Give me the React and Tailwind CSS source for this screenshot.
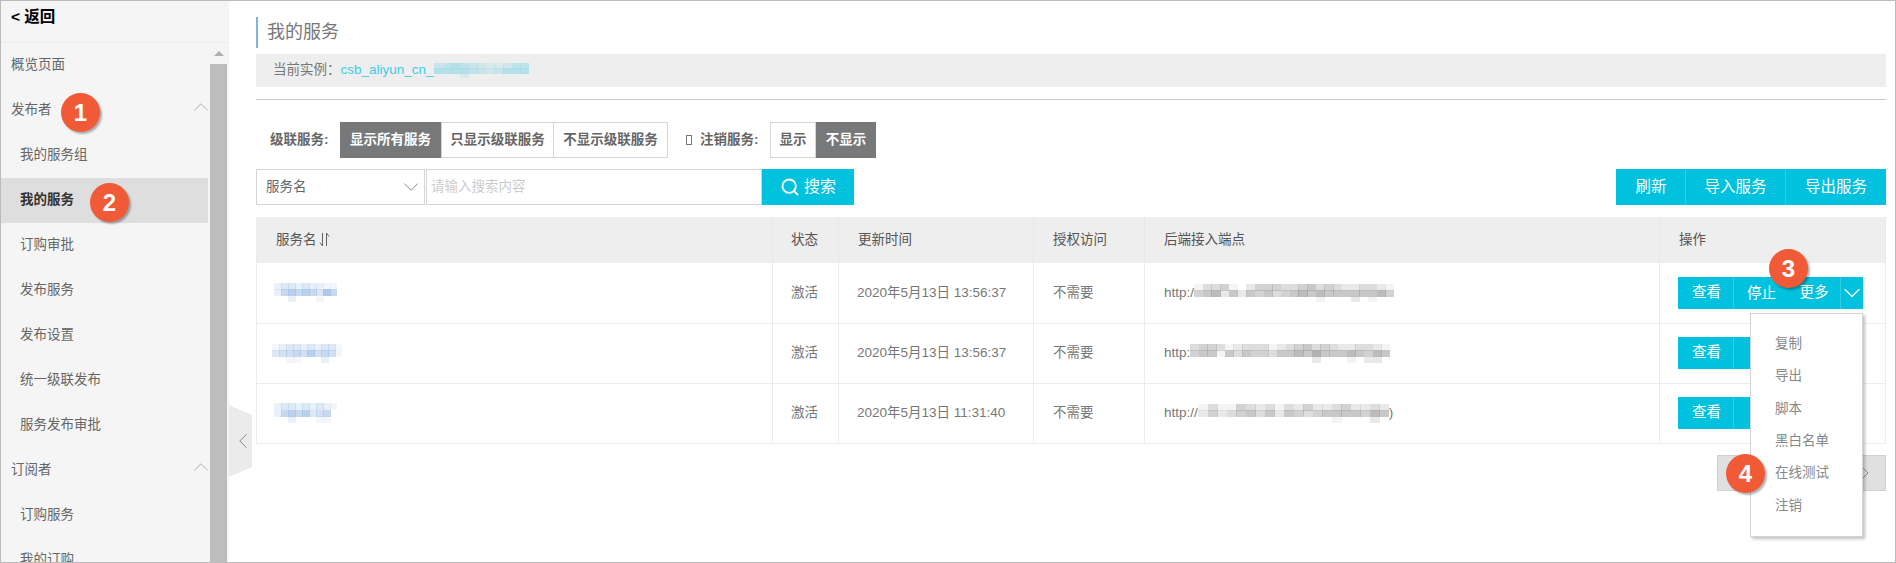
import { Search, ChevronDown, ChevronUp, ChevronLeft, ChevronRight } from 'lucide-react'

const FONT = { fontFamily: '"Liberation Sans", "Noto Sans CJK SC", sans-serif' }

const MENU = [
  { label: '概览页面' },
  { label: '发布者', group: true },
  { label: '我的服务组', sub: true },
  { label: '我的服务', sub: true, active: true },
  { label: '订购审批', sub: true },
  { label: '发布服务', sub: true },
  { label: '发布设置', sub: true },
  { label: '统一级联发布', sub: true },
  { label: '服务发布审批', sub: true },
  { label: '订阅者', group: true },
  { label: '订购服务', sub: true },
  { label: '我的订购', sub: true },
]

const ROWS = [
  {
    time: '2020年5月13日 13:56:37',
    name: { w: 63, h: 19, data: ['233232211', '256565375', '002000100'] },
    url: {
      prefix: 'http:/',
      w: 200,
      h: 18,
      data: ['13341024443345343223321', '45625254534565655555564', '00000000000000100020100'],
    },
  },
  {
    time: '2020年5月13日 13:56:37',
    name: { w: 70, h: 19, data: ['1233232331', '3445464541', '0011000200'] },
    url: {
      prefix: 'http:',
      w: 200,
      h: 19,
      data: ['34431233312345343223321', '45515354435565755565465', '00000000000000200010220'],
    },
  },
  {
    time: '2020年5月13日 11:31:40',
    name: { w: 63, h: 20, data: ['233232321', '256563450', '002000110'] },
    url: {
      prefix: 'http://',
      w: 191,
      h: 19,
      data: ['13114323132422342232', '24234535254345555465', '00000000000000100020'],
    },
  },
]

const ACTIONS = ['复制', '导出', '脚本', '黑白名单', '在线测试', '注销']

// pixelated patch standing in for redacted text; digits are opacity steps
function Mosaic({ w, h, data, color, className = '' }) {
  const cols = data[0].length
  const cw = w / cols
  const ch = h / data.length
  return (
    <svg width={w} height={h} className={`block shrink-0 ${className}`} shapeRendering="crispEdges">
      {data.map((row, y) =>
        [...row].map((d, x) => (
          <rect key={`${x}-${y}`} x={x * cw} y={y * ch} width={cw + 0.5} height={ch + 0.5} fill={color} opacity={Number(d) / 8} />
        )),
      )}
    </svg>
  )
}

function Badge({ n, className }) {
  return (
    <div className={`absolute z-20 flex h-[39px] w-[39px] items-center justify-center rounded-full bg-[#f15a36] text-[24px] font-bold text-white shadow-[2px_2px_2px_rgba(0,0,0,0.3)] ${className}`}>
      {n}
    </div>
  )
}

function Sidebar() {
  return (
    <aside className="relative flex w-[228px] shrink-0 flex-col overflow-hidden bg-[#f5f5f5]">
      <div className="flex h-[42px] shrink-0 items-start border-b border-[#ececec] pl-[10px] pt-[6px] text-[15.5px] font-bold leading-[20px] text-black">
        &lt; 返回
      </div>
      <div className="flex min-h-0 flex-1">
        <ul className="w-[207px] shrink-0">
          {MENU.map((m) => (
            <li
              key={m.label}
              className={`flex h-[45px] shrink-0 items-center justify-between text-[13.5px] ${m.sub ? 'pl-[19px]' : 'pl-[10px]'} ${m.active ? 'bg-[#dedede] font-bold text-[#333]' : 'text-[#666]'}`}
            >
              {m.label}
              {m.group && <ChevronUp size={26} strokeWidth={0.7} className="mb-[8px] mr-[-6px] text-[#999]" />}
            </li>
          ))}
        </ul>
        <div className="ml-[2px] flex w-[17px] shrink-0 flex-col">
          <div className="flex h-[21px] shrink-0 items-center justify-center">
            <span className="h-0 w-0 border-x-[5px] border-b-[5px] border-x-transparent border-b-[#b0b0b0]" />
          </div>
          <div className="flex-1 bg-[#bdbdbd]" />
        </div>
      </div>
    </aside>
  )
}

function Seg({ children, dark }) {
  return (
    <div className={`flex h-full items-center justify-center px-[8px] ${dark ? 'bg-[#76787a] text-white' : 'border border-[#d5d5d5] bg-white text-[#666]'}`}>
      {children}
    </div>
  )
}

function Filters() {
  return (
    <div className="mt-[22px] flex h-[36px] items-center text-[13.5px] font-bold text-[#666]">
      <span className="ml-[14px] w-[70px]">级联服务:</span>
      <div className="flex h-full">
        <div className="w-[101px]"><Seg dark>显示所有服务</Seg></div>
        <div className="w-[113px]"><Seg>只显示级联服务</Seg></div>
        <div className="ml-[-1px] w-[115px]"><Seg>不显示级联服务</Seg></div>
      </div>
      <span className="ml-[18px] mr-[8px] inline-block h-[10px] w-[6px] border border-[#777]" />
      <span className="w-[70px]">注销服务:</span>
      <div className="flex h-full">
        <div className="w-[46px]"><Seg>显示</Seg></div>
        <div className="w-[60px]"><Seg dark>不显示</Seg></div>
      </div>
    </div>
  )
}

function SearchRow() {
  return (
    <div className="mt-[11px] flex h-[36px] justify-between">
      <div className="flex">
        <div className="flex w-[169px] items-center justify-between border border-[#d5d5d5] pl-[9px] text-[13.5px] text-[#666]">
          服务名
          <ChevronDown size={26} strokeWidth={0.8} className="text-[#777]" />
        </div>
        <div className="ml-px flex w-[336px] items-center border border-[#d5d5d5] pl-[4px] text-[13.5px] text-[#ccc]">请输入搜索内容</div>
        <button className="flex w-[92px] items-center justify-center gap-[4px] bg-[#00c1de] text-[16px] text-white">
          <Search size={20} strokeWidth={2.2} />
          搜索
        </button>
      </div>
      <div className="flex bg-[#00c1de] text-[15.5px] text-white">
        <button className="w-[69px] pl-[1px]">刷新</button>
        <button className="w-[100px] border-l border-[#33cde5]">导入服务</button>
        <button className="w-[101px] border-l border-[#33cde5]">导出服务</button>
      </div>
    </div>
  )
}

function SortIcon() {
  return (
    <svg width="11" height="16" viewBox="0 0 11 16" fill="none" stroke="#666" strokeWidth="1" className="ml-[2px] shrink-0">
      <path d="M3.5 1v13M3.5 14L1 10.5" />
      <path d="M7.5 14V1M7.5 1L10 4.5" />
    </svg>
  )
}

function ServiceTable() {
  const th = 'border-r border-[#e8e8e8] text-left font-normal text-[#555]'
  const td = 'border-r border-[#ececec] text-[#777]'
  return (
    <table className="mt-[12px] w-[1629px] table-fixed border-collapse border-b border-l border-[#ececec] text-[13.5px]">
      <colgroup>
        <col className="w-[516px]" />
        <col className="w-[66px]" />
        <col className="w-[195px]" />
        <col className="w-[111px]" />
        <col className="w-[515px]" />
        <col className="w-[226px]" />
      </colgroup>
      <thead>
        <tr className="h-[46px] bg-[#eeeeee]">
          <th className={`${th} pl-[19px]`}>
            <span className="flex items-center">服务名<SortIcon /></span>
          </th>
          <th className={`${th} pl-[18px]`}>状态</th>
          <th className={`${th} pl-[19px]`}>更新时间</th>
          <th className={`${th} pl-[19px]`}>授权访问</th>
          <th className={`${th} pl-[19px]`}>后端接入端点</th>
          <th className={`${th} pl-[19px]`}>操作</th>
        </tr>
      </thead>
      <tbody>
        {ROWS.map((r, i) => (
          <tr key={i} className="h-[60px] border-b border-[#ececec] last:border-b-0">
            <td className={td}>
              <Mosaic {...r.name} color="#a3c2e6" className={i === 1 ? 'ml-[15px]' : 'ml-[17px]'} />
            </td>
            <td className={`${td} pl-[18px]`}>激活</td>
            <td className={`${td} pl-[18px]`}>{r.time}</td>
            <td className={`${td} pl-[19px]`}>不需要</td>
            <td className={`${td} pl-[19px]`}>
              <span className="flex items-center">
                {r.url.prefix}
                <Mosaic w={r.url.w} h={r.url.h} data={r.url.data} color="#a6a6a6" />
                {i === 2 && ')'}
              </span>
            </td>
            <td className={`${td} pl-[18px]`}>
              <div className="flex h-[32px] w-[185px] items-center bg-[#00c1de] text-[14.5px] text-white">
                <span className="w-[55px] pl-[2px] text-center">查看</span>
                <span className="h-full w-[55px] border-l border-[#33cde5] pl-[1px] text-center leading-[32px]">{i === 0 && '停止'}</span>
                <span className="w-[52px] text-center">{i === 0 && '更多'}</span>
                <span className="flex h-full w-[23px] items-center justify-center border-l border-[#33cde5]">
                  <ChevronDown size={28} strokeWidth={1.1} className="shrink-0" />
                </span>
              </div>
            </td>
          </tr>
        ))}
      </tbody>
    </table>
  )
}

function Pagination() {
  return (
    <div className="mt-[11px] flex justify-end">
      <div className="flex h-[36px] w-[169px] items-center justify-end border border-[#d0d0d0] bg-[#e0e0e0] pr-[8px]">
        <ChevronRight size={24} strokeWidth={0.9} className="text-[#7a869a]" />
      </div>
    </div>
  )
}

function ActionMenu() {
  return (
    <div className="absolute left-[1749px] top-[312px] z-10 flex h-[224px] w-[113px] flex-col justify-center border border-[#d5d5d5] bg-white pl-[24px] text-[13.5px] text-[#888] shadow-[2px_2px_3px_rgba(0,0,0,0.25)]">
      {ACTIONS.map((a) => (
        <div key={a} className="flex h-[32.3px] shrink-0 items-center">{a}</div>
      ))}
    </div>
  )
}

export default function App() {
  return (
    <div style={FONT} className="relative h-[563px] w-[1896px] overflow-hidden border border-[#bbbbbb] bg-white">
      <div className="flex h-full">
        <Sidebar />
        <main className="min-w-0 flex-1 pl-[27px] pr-[9px] pt-[16px]">
          <div className="flex h-[31px] items-center border-l-2 border-[#7fb5e0] pl-[9px] text-[18px] text-[#777]">我的服务</div>
          <div className="mt-[6px] flex h-[33px] items-center bg-[#eeeeee] pl-[17px] text-[13.5px] text-[#777]">
            当前实例：
            <span className="text-[#3ccde6]">csb_aliyun_cn_</span>
            <Mosaic w={95} h={15} data={['45654322355', '66665434666', '00020000000']} color="#a0dbe8" />
          </div>
          <div className="mt-[12px] border-t border-[#cccccc]" />
          <Filters />
          <SearchRow />
          <ServiceTable />
          <Pagination />
        </main>
      </div>

      {/* sidebar collapse tab */}
      <div className="absolute left-[228px] top-[404px] flex h-[72px] w-[23px] items-center justify-center bg-[#ebebeb] [clip-path:polygon(0_0,100%_14%,100%_86%,0_100%)]">
        <ChevronLeft size={26} strokeWidth={0.8} className="ml-[5px] shrink-0 text-[#777]" />
      </div>

      <ActionMenu />

      <Badge n="1" className="left-[60px] top-[92px]" />
      <Badge n="2" className="left-[89px] top-[182px]" />
      <Badge n="3" className="left-[1768px] top-[248px]" />
      <Badge n="4" className="left-[1725px] top-[453px]" />
    </div>
  )
}
